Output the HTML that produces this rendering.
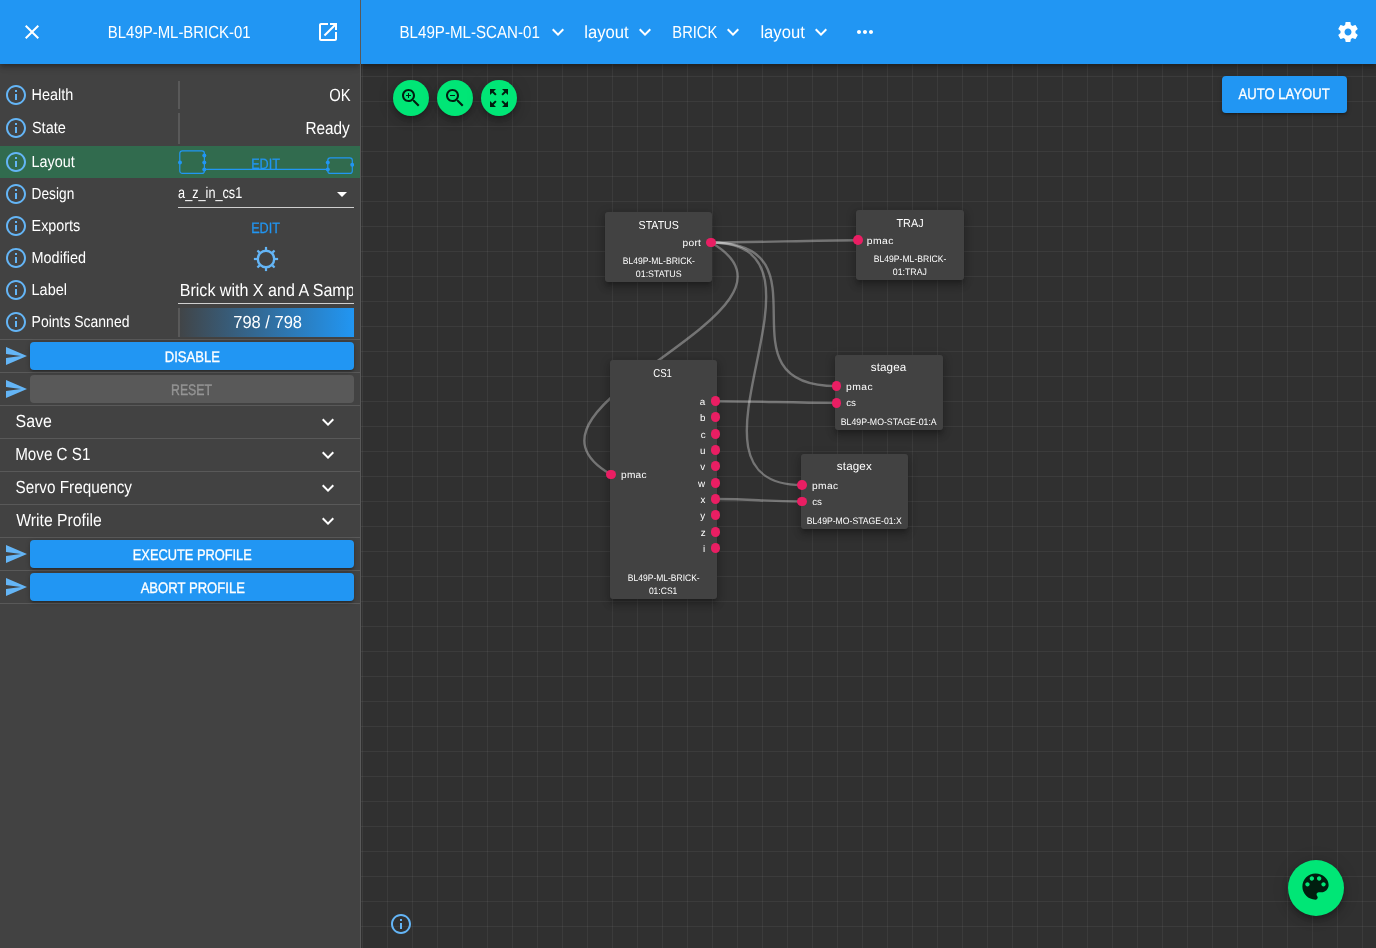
<!DOCTYPE html><html><head><meta charset="utf-8"><title>Malcolm</title><style>html,body{margin:0;padding:0}body{width:1376px;height:948px;overflow:hidden;position:relative;background:#303030;font-family:"Liberation Sans",sans-serif;color:#fff}.a{position:absolute}.t{position:absolute;white-space:pre}#dg{left:0;top:64px;width:1376px;height:884px;background-color:#303030;background-image:linear-gradient(0deg,transparent 24%,rgba(255,255,255,0.05) 25%,rgba(255,255,255,0.05) 26%,transparent 27%,transparent 74%,rgba(255,255,255,0.05) 75%,rgba(255,255,255,0.05) 76%,transparent 77%,transparent),linear-gradient(90deg,transparent 24%,rgba(255,255,255,0.05) 25%,rgba(255,255,255,0.05) 26%,transparent 27%,transparent 74%,rgba(255,255,255,0.05) 75%,rgba(255,255,255,0.05) 76%,transparent 77%,transparent);background-size:50px 50px}.node{position:absolute;background:#424242;border-radius:3px;box-shadow:0 3.5px 3.5px -2.1px rgba(0,0,0,.2),0 5.6px 7px .7px rgba(0,0,0,.14),0 2.1px 9.8px 1.4px rgba(0,0,0,.12)}.port{position:absolute;width:9.8px;height:9.8px;border-radius:50%;background:#e91e63}.hl{position:absolute;left:0;width:360px;height:1px;background:rgba(255,255,255,0.12)}.btn{position:absolute;left:30px;width:324px;height:28px;border-radius:4px;background:#2196f3;box-shadow:0 1px 5px 0 rgba(0,0,0,.2),0 2px 2px 0 rgba(0,0,0,.14),0 3px 1px -2px rgba(0,0,0,.12)}.fab{position:absolute;border-radius:50%;background:#00e676;box-shadow:0 3px 5px -1px rgba(0,0,0,.2),0 6px 10px 0 rgba(0,0,0,.14),0 1px 18px 0 rgba(0,0,0,.12)}</style></head><body><div id="dg" class="a"></div><svg class="a" style="left:0;top:0" width="1376" height="948" fill="none" stroke="rgba(255,255,255,0.33)" stroke-width="2.4"><path d="M711,242.5 C761,242.5 808,240.2 858,240.2"/><path d="M711,242.5 C833.2,312.8 488.8,404.2 611,474.5"/><path d="M711,242.5 C835,242.5 712.5,386.1 836.5,386.1"/><path d="M711,242.5 C852,242.5 661,485 802,485"/><path d="M715.6,401.2 C765.6,401.2 786.5,402.9 836.5,402.9"/><path d="M715.6,499 C755.6,499 762,501.5 802,501.5"/></svg><div class="node" style="left:605px;top:212px;width:107px;height:70px"></div><div class="node" style="left:856px;top:210px;width:108px;height:70px"></div><div class="node" style="left:610px;top:360px;width:107px;height:239px"></div><div class="node" style="left:835px;top:355px;width:108px;height:75px"></div><div class="node" style="left:801px;top:454px;width:107px;height:75px"></div><div class="port" style="left:706.10px;top:237.60px"></div><div class="port" style="left:853.10px;top:235.20px"></div><div class="port" style="left:606.10px;top:469.60px"></div><div class="port" style="left:831.60px;top:381.30px"></div><div class="port" style="left:831.60px;top:398.00px"></div><div class="port" style="left:797.10px;top:480.10px"></div><div class="port" style="left:797.10px;top:496.50px"></div><div class="port" style="left:710.70px;top:396.10px"></div><div class="port" style="left:710.70px;top:412.30px"></div><div class="port" style="left:710.70px;top:429.10px"></div><div class="port" style="left:710.70px;top:445.10px"></div><div class="port" style="left:710.70px;top:461.10px"></div><div class="port" style="left:710.70px;top:478.10px"></div><div class="port" style="left:710.70px;top:494.10px"></div><div class="port" style="left:710.70px;top:510.10px"></div><div class="port" style="left:710.70px;top:527.10px"></div><div class="port" style="left:710.70px;top:543.10px"></div><div class="fab" style="left:393px;top:80px;width:36px;height:36px"><svg style="position:absolute;left:6px;top:6px" width="24" height="24" viewBox="0 0 24 24"><path fill="rgba(0,0,0,0.87)" d="M15.5 14h-.79l-.28-.27C15.41 12.59 16 11.11 16 9.5 16 5.91 13.09 3 9.5 3S3 5.91 3 9.5 5.91 16 9.5 16c1.61 0 3.09-.59 4.23-1.57l.27.28v.79l5 4.99L20.49 19l-4.99-5zm-6 0C7.01 14 5 11.99 5 9.5S7.01 5 9.5 5 14 7.01 14 9.5 11.99 14 9.5 14zm2.5-4h-2v2H9v-2H7V9h2V7h1v2h2v1z"/></svg></div><div class="fab" style="left:437px;top:80px;width:36px;height:36px"><svg style="position:absolute;left:6px;top:6px" width="24" height="24" viewBox="0 0 24 24"><path fill="rgba(0,0,0,0.87)" d="M15.5 14h-.79l-.28-.27C15.41 12.59 16 11.11 16 9.5 16 5.91 13.09 3 9.5 3S3 5.91 3 9.5 5.91 16 9.5 16c1.61 0 3.09-.59 4.23-1.57l.27.28v.79l5 4.99L20.49 19l-4.99-5zm-6 0C7.01 14 5 11.99 5 9.5S7.01 5 9.5 5 14 7.01 14 9.5 11.99 14 9.5 14zM7 9h5v1H7z"/></svg></div><div class="fab" style="left:481px;top:80px;width:36px;height:36px"><svg style="position:absolute;left:6px;top:6px" width="24" height="24" viewBox="0 0 24 24"><path fill="rgba(0,0,0,0.87)" d="M15 3l2.3 2.3-2.89 2.87 1.42 1.42L18.7 6.7 21 9V3zM3 9l2.3-2.3 2.87 2.89 1.42-1.42L6.7 5.3 9 3H3zm6 12l-2.3-2.3 2.89-2.87-1.42-1.42L5.3 17.3 3 15v6zm12-6l-2.3 2.3-2.87-2.89-1.42 1.42 2.89 2.87L15 21h6z"/></svg></div><div class="fab" style="left:1288px;top:860px;width:56px;height:56px"><svg style="position:absolute;left:9.9px;top:9.3px" width="35" height="35" viewBox="0 0 24 24"><path fill="rgba(0,0,0,0.87)" d="M12 3c-4.97 0-9 4.03-9 9s4.03 9 9 9c.83 0 1.5-.67 1.5-1.5 0-.39-.15-.74-.39-1.01-.23-.26-.38-.61-.38-.99 0-.83.67-1.5 1.5-1.5H16c2.76 0 5-2.24 5-5 0-4.42-4.03-8-9-8zm-5.5 9c-.83 0-1.5-.67-1.5-1.5S5.67 9 6.5 9 8 9.67 8 10.5 7.33 12 6.5 12zm3-4C8.67 8 8 7.33 8 6.5S8.67 5 9.5 5s1.5.67 1.5 1.500S10.330 8 9.500 8zm5 0c-.83 0-1.5-.67-1.5-1.5S13.670 5 14.5 5s1.5.67 1.5 1.500S15.330 8 14.500 8zm3 4c-.83 0-1.5-.67-1.5-1.500S16.670 9 17.500 9s1.500.67 1.500 1.500-.67 1.500-1.500 1.500z"/></svg></div><svg style="position:absolute;left:389px;top:912px" width="24" height="24" viewBox="0 0 24 24"><path fill="#64b5f6" d="M11 17h2v-6h-2v6zm1-15C6.48 2 2 6.48 2 12s4.48 10 10 10 10-4.48 10-10S17.52 2 12 2zm0 18c-4.41 0-8-3.59-8-8s3.59-8 8-8 8 3.59 8 8-3.59 8-8 8zM11 9h2V7h-2v2z"/></svg><div class="a" style="left:1222px;top:76px;width:125px;height:37px;border-radius:4px;background:#2196f3;box-shadow:0 1px 5px 0 rgba(0,0,0,.2),0 2px 2px 0 rgba(0,0,0,.14),0 3px 1px -2px rgba(0,0,0,.12)"></div><div class="a" style="left:360px;top:0;width:1016px;height:64px;background:#2196f3;box-shadow:0 2px 4px -1px rgba(0,0,0,.2),0 4px 5px 0 rgba(0,0,0,.14),0 1px 10px 0 rgba(0,0,0,.12)"></div><svg style="position:absolute;left:546px;top:20px" width="24" height="24" viewBox="0 0 24 24"><path fill="#fff" d="M16.59 8.59L12 13.17 7.41 8.59 6 10l6 6 6-6z"/></svg><svg style="position:absolute;left:633px;top:20px" width="24" height="24" viewBox="0 0 24 24"><path fill="#fff" d="M16.59 8.59L12 13.17 7.41 8.59 6 10l6 6 6-6z"/></svg><svg style="position:absolute;left:721px;top:20px" width="24" height="24" viewBox="0 0 24 24"><path fill="#fff" d="M16.59 8.59L12 13.17 7.41 8.59 6 10l6 6 6-6z"/></svg><svg style="position:absolute;left:809.4px;top:20px" width="24" height="24" viewBox="0 0 24 24"><path fill="#fff" d="M16.59 8.59L12 13.17 7.41 8.59 6 10l6 6 6-6z"/></svg><svg style="position:absolute;left:853px;top:20px" width="24" height="24" viewBox="0 0 24 24"><path fill="#fff" d="M6 10c-1.1 0-2 .9-2 2s.9 2 2 2 2-.9 2-2-.9-2-2-2zm12 0c-1.1 0-2 .9-2 2s.9 2 2 2 2-.9 2-2-.9-2-2-2zm-6 0c-1.1 0-2 .9-2 2s.9 2 2 2 2-.9 2-2-.9-2-2-2z"/></svg><svg style="position:absolute;left:1336px;top:20px" width="24" height="24" viewBox="0 0 24 24"><path fill="#fff" d="M19.43 12.98c.04-.32.07-.64.07-.98s-.03-.66-.07-.98l2.11-1.65c.19-.15.24-.42.12-.64l-2-3.46c-.12-.22-.39-.3-.61-.22l-2.49 1c-.52-.4-1.08-.73-1.69-.98l-.38-2.65C14.46 2.18 14.25 2 14 2h-4c-.25 0-.46.18-.49.42l-.38 2.65c-.61.25-1.17.59-1.69.98l-2.49-1c-.23-.09-.49 0-.61.22l-2 3.46c-.13.22-.07.49.12.64l2.11 1.65c-.04.32-.07.65-.07.98s.03.66.07.98l-2.11 1.65c-.19.15-.24.42-.12.64l2 3.46c.12.22.39.3.61.22l2.49-1c.52.4 1.08.73 1.69.98l.38 2.65c.03.24.24.42.49.42h4c.25 0 .46-.18.49-.42l.38-2.65c.61-.25 1.17-.59 1.69-.98l2.49 1c.23.09.49 0 .61-.22l2-3.46c.12-.22.07-.49-.12-.64l-2.11-1.65zM12 15.5c-1.93 0-3.5-1.57-3.5-3.5s1.57-3.5 3.5-3.5 3.5 1.57 3.5 3.5-1.57 3.5-3.5 3.5z"/></svg><div class="a" style="left:0;top:0;width:361px;height:948px;overflow:hidden"><div class="a" style="left:0;top:0;width:361px;height:948px;background:#424242"></div><div class="a" style="left:0;top:146px;width:360px;height:32px;background:#316b4e"></div><div class="a" style="left:0;top:0;width:360px;height:64px;background:#2196f3;box-shadow:0 2px 4px -1px rgba(0,0,0,.2),0 4px 5px 0 rgba(0,0,0,.14),0 1px 10px 0 rgba(0,0,0,.12)"></div><div class="a" style="left:360px;top:0;width:1px;height:948px;background:#595959"></div></div><svg style="position:absolute;left:20px;top:20px" width="24" height="24" viewBox="0 0 24 24"><path fill="#fff" d="M19 6.41L17.59 5 12 10.59 6.41 5 5 6.41 10.59 12 5 17.59 6.41 19 12 13.41 17.59 19 19 17.59 13.41 12z"/></svg><svg style="position:absolute;left:316px;top:20px" width="24" height="24" viewBox="0 0 24 24"><path fill="#fff" d="M19 19H5V5h7V3H5c-1.11 0-2 .9-2 2v14c0 1.1.89 2 2 2h14c1.1 0 2-.9 2-2v-7h-2v7zM14 3v2h3.59l-9.83 9.83 1.41 1.41L19 6.41V10h2V3h-7z"/></svg><svg style="position:absolute;left:4px;top:83px" width="24" height="24" viewBox="0 0 24 24"><path fill="#64b5f6" d="M11 17h2v-6h-2v6zm1-15C6.48 2 2 6.48 2 12s4.48 10 10 10 10-4.48 10-10S17.52 2 12 2zm0 18c-4.41 0-8-3.59-8-8s3.59-8 8-8 8 3.59 8 8-3.59 8-8 8zM11 9h2V7h-2v2z"/></svg><svg style="position:absolute;left:4px;top:116px" width="24" height="24" viewBox="0 0 24 24"><path fill="#64b5f6" d="M11 17h2v-6h-2v6zm1-15C6.48 2 2 6.48 2 12s4.48 10 10 10 10-4.48 10-10S17.52 2 12 2zm0 18c-4.41 0-8-3.59-8-8s3.59-8 8-8 8 3.59 8 8-3.59 8-8 8zM11 9h2V7h-2v2z"/></svg><svg style="position:absolute;left:4px;top:150px" width="24" height="24" viewBox="0 0 24 24"><path fill="#64b5f6" d="M11 17h2v-6h-2v6zm1-15C6.48 2 2 6.48 2 12s4.48 10 10 10 10-4.48 10-10S17.52 2 12 2zm0 18c-4.41 0-8-3.59-8-8s3.59-8 8-8 8 3.59 8 8-3.59 8-8 8zM11 9h2V7h-2v2z"/></svg><svg style="position:absolute;left:4px;top:182px" width="24" height="24" viewBox="0 0 24 24"><path fill="#64b5f6" d="M11 17h2v-6h-2v6zm1-15C6.48 2 2 6.48 2 12s4.48 10 10 10 10-4.48 10-10S17.52 2 12 2zm0 18c-4.41 0-8-3.59-8-8s3.59-8 8-8 8 3.59 8 8-3.59 8-8 8zM11 9h2V7h-2v2z"/></svg><svg style="position:absolute;left:4px;top:214px" width="24" height="24" viewBox="0 0 24 24"><path fill="#64b5f6" d="M11 17h2v-6h-2v6zm1-15C6.48 2 2 6.48 2 12s4.48 10 10 10 10-4.48 10-10S17.52 2 12 2zm0 18c-4.41 0-8-3.59-8-8s3.59-8 8-8 8 3.59 8 8-3.59 8-8 8zM11 9h2V7h-2v2z"/></svg><svg style="position:absolute;left:4px;top:246px" width="24" height="24" viewBox="0 0 24 24"><path fill="#64b5f6" d="M11 17h2v-6h-2v6zm1-15C6.48 2 2 6.48 2 12s4.48 10 10 10 10-4.48 10-10S17.52 2 12 2zm0 18c-4.41 0-8-3.59-8-8s3.59-8 8-8 8 3.59 8 8-3.59 8-8 8zM11 9h2V7h-2v2z"/></svg><svg style="position:absolute;left:4px;top:278px" width="24" height="24" viewBox="0 0 24 24"><path fill="#64b5f6" d="M11 17h2v-6h-2v6zm1-15C6.48 2 2 6.48 2 12s4.48 10 10 10 10-4.48 10-10S17.52 2 12 2zm0 18c-4.41 0-8-3.59-8-8s3.59-8 8-8 8 3.59 8 8-3.59 8-8 8zM11 9h2V7h-2v2z"/></svg><svg style="position:absolute;left:4px;top:310px" width="24" height="24" viewBox="0 0 24 24"><path fill="#64b5f6" d="M11 17h2v-6h-2v6zm1-15C6.48 2 2 6.48 2 12s4.48 10 10 10 10-4.48 10-10S17.52 2 12 2zm0 18c-4.41 0-8-3.59-8-8s3.59-8 8-8 8 3.59 8 8-3.59 8-8 8zM11 9h2V7h-2v2z"/></svg><div class="a" style="left:178px;top:81px;width:2px;height:28px;background:rgba(255,255,255,0.12)"></div><div class="a" style="left:178px;top:113px;width:2px;height:31px;background:rgba(255,255,255,0.12)"></div><div class="a" style="left:178px;top:308px;width:2px;height:29px;background:rgba(255,255,255,0.12)"></div><svg class="a" style="left:178px;top:146px" width="176" height="32" fill="none" stroke="#2196f3" stroke-width="1.2"><rect x="1.8" y="4.8" width="24.6" height="22.6" rx="2.5"/><rect x="149.8" y="11.8" width="24.5" height="15.6" rx="2.5"/><path d="M26.4 23.4H149.8"/><circle cx="2" cy="16.4" r="2" fill="#2196f3" stroke="none"/><circle cx="26.3" cy="9.4" r="2" fill="#2196f3" stroke="none"/><circle cx="26.3" cy="16.4" r="2" fill="#2196f3" stroke="none"/><circle cx="26.3" cy="23.4" r="2" fill="#2196f3" stroke="none"/><circle cx="149.8" cy="16.4" r="2" fill="#2196f3" stroke="none"/><circle cx="149.8" cy="23.4" r="2" fill="#2196f3" stroke="none"/><circle cx="174.2" cy="18.8" r="2" fill="#2196f3" stroke="none"/></svg><div class="a" style="left:178px;top:207px;width:176px;height:1px;background:rgba(255,255,255,0.75)"></div><svg style="position:absolute;left:330px;top:182px" width="24" height="24" viewBox="0 0 24 24"><path fill="#fff" d="M7 10l5 5 5-5z"/></svg><svg class="a" style="left:252px;top:244.5px" width="28" height="28" viewBox="-14 -14 28 28" fill="none" stroke="#64b5f6" stroke-width="2.4"><circle r="8.2"/><path d="M9.00 0.00L12.10 0.00" stroke-width="2.2"/><path d="M6.36 6.36L8.56 8.56" stroke-width="2.2"/><path d="M0.00 9.00L0.00 12.10" stroke-width="2.2"/><path d="M-6.36 6.36L-8.56 8.56" stroke-width="2.2"/><path d="M-9.00 0.00L-12.10 0.00" stroke-width="2.2"/><path d="M-6.36 -6.36L-8.56 -8.56" stroke-width="2.2"/><path d="M-0.00 -9.00L-0.00 -12.10" stroke-width="2.2"/><path d="M6.36 -6.36L8.56 -8.56" stroke-width="2.2"/></svg><div class="a" style="left:178px;top:303px;width:176px;height:1px;background:rgba(255,255,255,0.75)"></div><div class="a" style="left:180px;top:308px;width:174px;height:29px;background:linear-gradient(to right,rgba(33,150,243,0.03),#2196f3)"></div><div class="hl" style="top:339px"></div><div class="hl" style="top:372px"></div><div class="hl" style="top:405px"></div><div class="hl" style="top:438px"></div><div class="hl" style="top:471px"></div><div class="hl" style="top:504px"></div><div class="hl" style="top:537px"></div><div class="hl" style="top:570px"></div><div class="hl" style="top:603px"></div><div class="btn" style="top:342px"></div><svg style="position:absolute;left:4px;top:343.5px" width="24" height="24" viewBox="0 0 24 24"><path fill="#64b5f6" d="M2.01 21L23 12 2.01 3 2 10l15 2-15 2z"/></svg><div class="btn" style="top:375px;background:rgba(255,255,255,0.12);box-shadow:none"></div><svg style="position:absolute;left:4px;top:376.5px" width="24" height="24" viewBox="0 0 24 24"><path fill="#64b5f6" d="M2.01 21L23 12 2.01 3 2 10l15 2-15 2z"/></svg><div class="btn" style="top:540px"></div><svg style="position:absolute;left:4px;top:541.5px" width="24" height="24" viewBox="0 0 24 24"><path fill="#64b5f6" d="M2.01 21L23 12 2.01 3 2 10l15 2-15 2z"/></svg><div class="btn" style="top:573px"></div><svg style="position:absolute;left:4px;top:574.5px" width="24" height="24" viewBox="0 0 24 24"><path fill="#64b5f6" d="M2.01 21L23 12 2.01 3 2 10l15 2-15 2z"/></svg><svg style="position:absolute;left:316px;top:410px" width="24" height="24" viewBox="0 0 24 24"><path fill="#fff" d="M16.59 8.59L12 13.17 7.41 8.59 6 10l6 6 6-6z"/></svg><svg style="position:absolute;left:316px;top:443px" width="24" height="24" viewBox="0 0 24 24"><path fill="#fff" d="M16.59 8.59L12 13.17 7.41 8.59 6 10l6 6 6-6z"/></svg><svg style="position:absolute;left:316px;top:476px" width="24" height="24" viewBox="0 0 24 24"><path fill="#fff" d="M16.59 8.59L12 13.17 7.41 8.59 6 10l6 6 6-6z"/></svg><svg style="position:absolute;left:316px;top:509px" width="24" height="24" viewBox="0 0 24 24"><path fill="#fff" d="M16.59 8.59L12 13.17 7.41 8.59 6 10l6 6 6-6z"/></svg><div class="a" style="left:0;top:0;width:1376px;height:948px;will-change:transform;text-rendering:geometricPrecision"><span class="t" style="left:107px;top:24px;color:#fff;font-size:17.6px;line-height:17.6px;transform:translate(0.82px,0.00px) scaleX(0.8489);transform-origin:0 0;">BL49P-ML-BRICK-01</span><span class="t" style="left:399px;top:24px;color:#fff;font-size:17.6px;line-height:17.6px;transform:translate(0.50px,0.20px) scaleX(0.8597);transform-origin:0 0;">BL49P-ML-SCAN-01</span><span class="t" style="left:584px;top:24px;color:#fff;font-size:17.6px;line-height:17.6px;transform:translate(0.20px,0.20px) scaleX(0.9454);transform-origin:0 0;">layout</span><span class="t" style="left:672px;top:24px;color:#fff;font-size:17.6px;line-height:17.6px;transform:translate(0.33px,0.20px) scaleX(0.8355);transform-origin:0 0;">BRICK</span><span class="t" style="left:760px;top:24px;color:#fff;font-size:17.6px;line-height:17.6px;transform:translate(0.40px,0.20px) scaleX(0.9454);transform-origin:0 0;">layout</span><span class="t" style="left:31px;top:87px;color:#fff;font-size:16.1px;line-height:16.1px;transform:translate(0.55px,0.00px) scaleX(0.8958);transform-origin:0 0;">Health</span><span class="t" style="left:31px;top:120px;color:#fff;font-size:16.1px;line-height:16.1px;transform:translate(0.92px,0.00px) scaleX(0.9032);transform-origin:0 0;">State</span><span class="t" style="left:31px;top:154px;color:#fff;font-size:16.1px;line-height:16.1px;transform:translate(0.55px,0.00px) scaleX(0.8957);transform-origin:0 0;">Layout</span><span class="t" style="left:31px;top:186px;color:#fff;font-size:16.1px;line-height:16.1px;transform:translate(0.61px,0.00px) scaleX(0.851);transform-origin:0 0;">Design</span><span class="t" style="left:31px;top:218px;color:#fff;font-size:16.1px;line-height:16.1px;transform:translate(0.56px,0.00px) scaleX(0.892);transform-origin:0 0;">Exports</span><span class="t" style="left:31px;top:250px;color:#fff;font-size:16.1px;line-height:16.1px;transform:translate(0.55px,0.00px) scaleX(0.8969);transform-origin:0 0;">Modified</span><span class="t" style="left:31px;top:282px;color:#fff;font-size:16.1px;line-height:16.1px;transform:translate(0.55px,0.00px) scaleX(0.899);transform-origin:0 0;">Label</span><span class="t" style="left:31px;top:314px;color:#fff;font-size:16.1px;line-height:16.1px;transform:translate(0.59px,0.00px) scaleX(0.8677);transform-origin:0 0;">Points Scanned</span><span class="t" style="left:329px;top:87px;color:#fff;font-size:17.6px;line-height:17.6px;transform:translate(0.16px,0.00px) scaleX(0.8404);transform-origin:0 0;">OK</span><span class="t" style="left:305px;top:120px;color:#fff;font-size:17.6px;line-height:17.6px;transform:translate(0.40px,0.00px) scaleX(0.8728);transform-origin:0 0;">Ready</span><span class="t" style="left:251px;top:157px;color:#2196f3;font-size:15.0px;line-height:15.0px;-webkit-text-stroke:0.3px currentColor;transform:translate(0.13px,0.00px) scaleX(0.8424);transform-origin:0 0;">EDIT</span><span class="t" style="left:178px;top:186px;color:#fff;font-size:15.7px;line-height:15.7px;transform:translate(0.10px,0.00px) scaleX(0.8082);transform-origin:0 0;">a_z_in_cs1</span><span class="t" style="left:251px;top:221px;color:#2196f3;font-size:15.0px;line-height:15.0px;-webkit-text-stroke:0.3px currentColor;transform:translate(0.13px,0.00px) scaleX(0.8424);transform-origin:0 0;">EDIT</span><div class="a" style="left:0;top:0;width:352.5px;height:948px;overflow:hidden"><span class="t" style="left:179px;top:282px;color:#fff;font-size:17.6px;line-height:17.6px;transform:translate(0.73px,0.00px) scaleX(0.9124);transform-origin:0 0;">Brick with X and A Samp</span></div><span class="t" style="left:233px;top:314px;color:#fff;font-size:17.6px;line-height:17.6px;transform:translate(0.20px,0.00px) scaleX(0.9378);transform-origin:0 0;">798 / 798</span><span class="t" style="left:164px;top:350px;color:#fff;font-size:15.3px;line-height:15.3px;-webkit-text-stroke:0.3px currentColor;transform:translate(0.73px,0.00px) scaleX(0.8544);transform-origin:0 0;">DISABLE</span><span class="t" style="left:171px;top:383px;color:rgba(255,255,255,0.3);font-size:15.3px;line-height:15.3px;-webkit-text-stroke:0.3px currentColor;transform:translate(0.03px,0.00px) scaleX(0.8023);transform-origin:0 0;">RESET</span><span class="t" style="left:132px;top:548px;color:#fff;font-size:15.3px;line-height:15.3px;-webkit-text-stroke:0.3px currentColor;transform:translate(0.78px,0.00px) scaleX(0.8384);transform-origin:0 0;">EXECUTE PROFILE</span><span class="t" style="left:140px;top:581px;color:#fff;font-size:15.3px;line-height:15.3px;-webkit-text-stroke:0.3px currentColor;transform:translate(0.64px,0.00px) scaleX(0.8559);transform-origin:0 0;">ABORT PROFILE</span><span class="t" style="left:1238px;top:87px;color:#fff;font-size:15.3px;line-height:15.3px;-webkit-text-stroke:0.3px currentColor;transform:translate(0.52px,0.00px) scaleX(0.8567);transform-origin:0 0;">AUTO LAYOUT</span><span class="t" style="left:15px;top:413px;color:#fff;font-size:17.6px;line-height:17.6px;transform:translate(0.52px,0.00px) scaleX(0.9064);transform-origin:0 0;">Save</span><span class="t" style="left:15px;top:446px;color:#fff;font-size:17.6px;line-height:17.6px;transform:translate(0.20px,0.00px) scaleX(0.8639);transform-origin:0 0;">Move C S1</span><span class="t" style="left:15px;top:479px;color:#fff;font-size:17.6px;line-height:17.6px;transform:translate(0.56px,0.00px) scaleX(0.8688);transform-origin:0 0;">Servo Frequency</span><span class="t" style="left:16px;top:512px;color:#fff;font-size:17.6px;line-height:17.6px;transform:translate(0.23px,0.00px) scaleX(0.8953);transform-origin:0 0;">Write Profile</span><span class="t" style="left:638px;top:220px;color:#fff;font-size:11.6px;line-height:11.6px;transform:translate(0.62px,0.00px) scaleX(0.9127);transform-origin:0 0;">STATUS</span><span class="t" style="left:682px;top:238px;color:#fff;font-size:9.8px;line-height:9.8px;letter-spacing:0.233px;transform:translate(0.56px,0.60px) scaleX(1.0432);transform-origin:0 0;">port</span><span class="t" style="left:622px;top:256px;color:#fff;font-size:9.4px;line-height:9.4px;transform:translate(0.72px,0.00px) scaleX(0.9121);transform-origin:0 0;">BL49P-ML-BRICK-</span><span class="t" style="left:635px;top:268px;color:#fff;font-size:9.4px;line-height:9.4px;transform:translate(0.84px,0.50px) scaleX(0.9413);transform-origin:0 0;">01:STATUS</span><span class="t" style="left:896px;top:217px;color:#fff;font-size:11.6px;line-height:11.6px;transform:translate(0.48px,0.90px) scaleX(0.9352);transform-origin:0 0;">TRAJ</span><span class="t" style="left:866px;top:236px;color:#fff;font-size:9.8px;line-height:9.8px;letter-spacing:0.431px;transform:translate(0.76px,0.75px) scaleX(1.0562);transform-origin:0 0;">pmac</span><span class="t" style="left:873px;top:253px;color:#fff;font-size:9.4px;line-height:9.4px;transform:translate(0.75px,0.60px) scaleX(0.9172);transform-origin:0 0;">BL49P-ML-BRICK-</span><span class="t" style="left:892px;top:266px;color:#fff;font-size:9.4px;line-height:9.4px;transform:translate(0.86px,0.50px) scaleX(0.9323);transform-origin:0 0;">01:TRAJ</span><span class="t" style="left:653px;top:367px;color:#fff;font-size:11.6px;line-height:11.6px;transform:translate(0.23px,0.90px) scaleX(0.8251);transform-origin:0 0;">CS1</span><span class="t" style="left:620px;top:470px;color:#fff;font-size:9.8px;line-height:9.8px;letter-spacing:0.255px;transform:translate(0.99px,0.75px) scaleX(1.0333);transform-origin:0 0;">pmac</span><span class="t" style="left:627px;top:572px;color:#fff;font-size:9.4px;line-height:9.4px;transform:translate(0.85px,0.90px) scaleX(0.907);transform-origin:0 0;">BL49P-ML-BRICK-</span><span class="t" style="left:648px;top:585px;color:#fff;font-size:9.4px;line-height:9.4px;transform:translate(0.88px,0.75px) scaleX(0.9099);transform-origin:0 0;">01:CS1</span><span class="t" style="left:870px;top:361px;color:#fff;font-size:11.6px;line-height:11.6px;letter-spacing:0.116px;transform:translate(0.81px,0.90px) scaleX(1);transform-origin:0 0;">stagea</span><span class="t" style="left:845px;top:383px;color:#fff;font-size:9.8px;line-height:9.8px;letter-spacing:0.431px;transform:translate(0.96px,0.00px) scaleX(1.0562);transform-origin:0 0;">pmac</span><span class="t" style="left:846px;top:398px;color:#fff;font-size:9.8px;line-height:9.8px;letter-spacing:-0.088px;transform:translate(0.26px,0.90px) scaleX(1);transform-origin:0 0;">cs</span><span class="t" style="left:840px;top:417px;color:#fff;font-size:9.4px;line-height:9.4px;transform:translate(0.73px,0.00px) scaleX(0.9318);transform-origin:0 0;">BL49P-MO-STAGE-01:A</span><span class="t" style="left:836px;top:461px;color:#fff;font-size:11.6px;line-height:11.6px;letter-spacing:0.154px;transform:translate(0.80px,0.00px) scaleX(1);transform-origin:0 0;">stagex</span><span class="t" style="left:811px;top:481px;color:#fff;font-size:9.8px;line-height:9.8px;letter-spacing:0.335px;transform:translate(0.98px,0.90px) scaleX(1.0438);transform-origin:0 0;">pmac</span><span class="t" style="left:812px;top:497px;color:#fff;font-size:9.8px;line-height:9.8px;letter-spacing:-0.088px;transform:translate(0.26px,0.75px) scaleX(1);transform-origin:0 0;">cs</span><span class="t" style="left:806px;top:515px;color:#fff;font-size:9.4px;line-height:9.4px;transform:translate(0.76px,0.90px) scaleX(0.922);transform-origin:0 0;">BL49P-MO-STAGE-01:X</span><span class="t" style="left:699px;top:398px;color:#fff;font-size:9.8px;line-height:9.8px;transform:translate(0.76px,0.00px) scaleX(1);transform-origin:0 0;">a</span><span class="t" style="left:700px;top:414px;color:#fff;font-size:9.8px;line-height:9.8px;transform:translate(0.10px,0.10px) scaleX(1);transform-origin:0 0;">b</span><span class="t" style="left:700px;top:431px;color:#fff;font-size:9.8px;line-height:9.8px;transform:translate(0.67px,0.00px) scaleX(1);transform-origin:0 0;">c</span><span class="t" style="left:700px;top:447px;color:#fff;font-size:9.8px;line-height:9.8px;transform:translate(0.10px,0.00px) scaleX(1);transform-origin:0 0;">u</span><span class="t" style="left:700px;top:463px;color:#fff;font-size:9.8px;line-height:9.8px;transform:translate(0.35px,0.00px) scaleX(1);transform-origin:0 0;">v</span><span class="t" style="left:698px;top:480px;color:#fff;font-size:9.8px;line-height:9.8px;transform:translate(0.10px,0.00px) scaleX(1);transform-origin:0 0;">w</span><span class="t" style="left:700px;top:496px;color:#fff;font-size:9.8px;line-height:9.8px;transform:translate(0.45px,0.00px) scaleX(1);transform-origin:0 0;">x</span><span class="t" style="left:700px;top:512px;color:#fff;font-size:9.8px;line-height:9.8px;transform:translate(0.28px,0.00px) scaleX(1);transform-origin:0 0;">y</span><span class="t" style="left:700px;top:529px;color:#fff;font-size:9.8px;line-height:9.8px;transform:translate(0.72px,0.00px) scaleX(1);transform-origin:0 0;">z</span><span class="t" style="left:703px;top:545px;color:#fff;font-size:9.8px;line-height:9.8px;transform:translate(0.10px,0.00px) scaleX(1);transform-origin:0 0;">i</span></div></body></html>
